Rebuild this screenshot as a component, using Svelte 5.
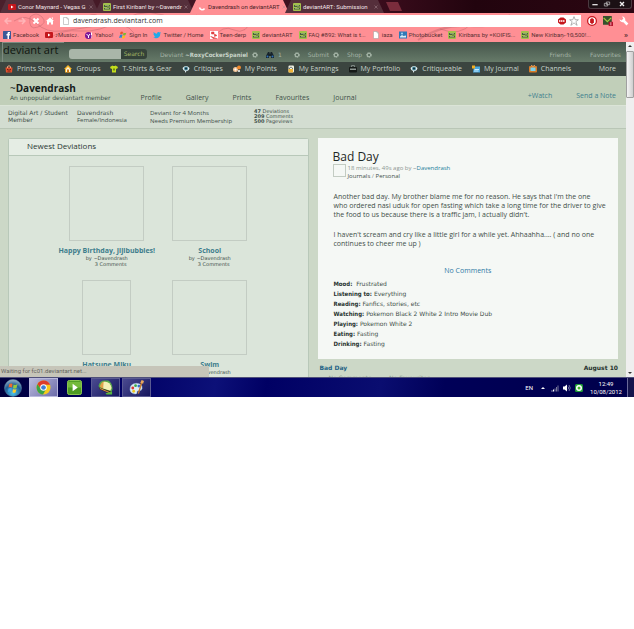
<script>
  const tabs = [
    { title: 'Conor Maynard - Vegas G', icon: 'youtube' },
    { title: 'First Kiriban! by ~Davendr', icon: 'da' },
    { title: 'Davendrash on deviantART', icon: 'spinner', active: true },
    { title: 'deviantART: Submission', icon: 'da' },
  ];

  const bookmarks = [
    { label: 'Facebook', icon: 'facebook' },
    { label: '♪Music♪.', icon: 'youtube' },
    { label: 'Yahoo!', icon: 'yahoo' },
    { label: 'Sign In', icon: 'windows' },
    { label: 'Twitter / Home', icon: 'twitter' },
    { label: 'Teen-derp', icon: 'derp' },
    { label: 'deviantART', icon: 'da' },
    { label: 'FAQ #892: What is t...', icon: 'da' },
    { label: 'iaza', icon: 'page' },
    { label: 'Photobucket', icon: 'photo' },
    { label: 'Kiribans by =KOIFIS...', icon: 'da' },
    { label: 'New Kiriban- 10,500!...', icon: 'da' },
  ];

  const navItems = [
    { label: 'Prints Shop', icon: 'bag' },
    { label: 'Groups', icon: 'house' },
    { label: 'T-Shirts & Gear', icon: 'shirt' },
    { label: 'Critiques', icon: 'critique' },
    { label: 'My Points', icon: 'points' },
    { label: 'My Earnings', icon: 'earnings' },
    { label: 'My Portfolio', icon: 'portfolio' },
    { label: 'Critiqueable', icon: 'critique' },
    { label: 'My Journal', icon: 'journal' },
    { label: 'Channels', icon: 'channels' },
  ];

  const profileLinks = ['Profile', 'Gallery', 'Prints', 'Favourites', 'Journal'];

  const deviations = [
    { title: 'Happy Birthday, Jijibubbles!', comments: '3 Comments' },
    { title: 'School', comments: '3 Comments' },
    { title: 'Hatsune Miku', narrow: true },
    { title: 'Swim' },
  ];

  const moods = [
    ['Mood:', '\u00a0Frustrated'],
    ['Listening to:', 'Everything'],
    ['Reading:', 'Fanfics, stories, etc'],
    ['Watching:', 'Pokemon Black 2 White 2 Intro Movie Dub'],
    ['Playing:', 'Pokemon White 2'],
    ['Eating:', 'Fasting'],
    ['Drinking:', 'Fasting'],
  ];
</script>

{#snippet icon(name)}
  <svg class="icon" viewBox="0 0 16 16" aria-hidden="true">
    {#if name === 'youtube'}
      <rect x="0" y="2" width="16" height="12" rx="2" fill="#c4161c" />
      <path d="M6 5l5 3-5 3z" fill="#fff" />
    {:else if name === 'da'}
      <rect width="16" height="16" rx="2" fill="#a3c04c" />
      <path d="M2 4h12v3H8v2h6v4H2v-3h6V8H2z" fill="#46603a" />
      <path d="M4 5h8M4 11h8" stroke="#d8e8a0" />
    {:else if name === 'spinner'}
      <path d="M3 9a5.500 5.500 0 0 0 10 2" fill="none" stroke="#fff" stroke-width="3" />
    {:else if name === 'facebook'}
      <rect width="16" height="16" rx="1" fill="#3b5998" />
      <path d="M9 16V9H7V6h2V4.500C9 2.500 10 2 12 2h2v3h-1.500c-.5 0-.5.3-.5.700V6h2l-.4 3H12v7z" fill="#fff" />
    {:else if name === 'yahoo'}
      <circle cx="7" cy="9" r="7" fill="#7b1596" />
      <path d="M3 6l4 4 3-4M7 10v4M13 3v6M13 11v2" stroke="#fff" stroke-width="2" fill="none" />
    {:else if name === 'windows'}
      <path d="M3 2q3-2 5 0L7 7Q4 5 2 7z" fill="#e8562a" />
      <path d="M9 3q3 2 6 0l-2 5q-3 2-5 0z" fill="#7cb82f" />
      <path d="M2 8q3-2 5 0l-2 6q-2-2-5 0z" fill="#2c86d0" />
      <path d="M8 9q3 2 5 0l-2 5q-2 2-5 0z" fill="#f9c112" />
    {:else if name === 'twitter'}
      <path d="M0 13c3 0 4-1 5-2-2 0-3-1-3-2l1-.2C1 8 .5 6 1 5.500l1 .3C.5 4 1 2.500 1.500 2c2 2 4 3.500 6.500 3.500C8 3 9.500 2 11 2c1.500 0 2 .5 2.500 1L16 2.500 14.500 5C15 12 9 17 0 13z" fill="#23a9e8" />
    {:else if name === 'derp'}
      <rect width="16" height="16" fill="#fff" />
      <path d="M3 2h5v4H3zM9 6l5 3-5 2zM1 10l5 5h9" fill="#e2484c" stroke="#d33" />
    {:else if name === 'page'}
      <path d="M3 1h7l3 3v11H3z" fill="#fff" stroke="#999" />
      <path d="M10 1v3h3" fill="none" stroke="#999" />
    {:else if name === 'photo'}
      <rect y="1" width="16" height="14" fill="#2f79b7" />
      <path d="M2 11l4-3 3 2 5-1v4H2z" fill="#d8edf8" />
      <circle cx="6" cy="5" r="2" fill="#a9d7f2" />
    {:else if name === 'bag'}
      <path d="M1 5h14l-1 10H2z" fill="#e2512e" />
      <path d="M5 6V3q3-3 6 0v3" fill="none" stroke="#f3a07a" stroke-width="2" />
      <path d="M4 9h3M9 9h3M5 12h6" stroke="#7a1f10" stroke-width="2" />
    {:else if name === 'house'}
      <path d="M8 0l8 8h-2v7H2V8H0z" fill="#f7b52a" />
      <path d="M8 4l4 4v6H4V8z" fill="#fff6d8" />
      <rect x="6" y="9" width="4" height="6" fill="#c9771a" />
    {:else if name === 'shirt'}
      <path d="M5 1q3 2 6 0l5 3-2 4-2-1v8H4V7L2 8 0 4z" fill="#c3dd1c" />
      <path d="M6 7h4v4H6z" fill="#6f8b12" />
    {:else if name === 'critique'}
      <path d="M1 6q7-8 14 0-1 6-6 6l-3 4v-4Q2 11 1 6z" fill="#e6f1f2" />
      <circle cx="8" cy="7" r="4" fill="#4b8fa3" />
      <circle cx="8" cy="7" r="2" fill="#132a33" />
    {:else if name === 'points'}
      <circle cx="5" cy="9" r="5" fill="#f4c79a" />
      <circle cx="12" cy="5" r="4" fill="#f08a2c" />
      <path d="M3 9h4M5 7v4" stroke="#fff" stroke-width="2" />
      <circle cx="12" cy="12" r="2" fill="#fff" />
    {:else if name === 'earnings'}
      <rect x="3" y="1" width="11" height="14" rx="2" fill="#f2f2e4" />
      <path d="M5 9V6q3-4 6 0v3" fill="none" stroke="#6c7c78" stroke-width="2" />
      <rect x="3" y="8" width="9" height="7" fill="#eeb43a" />
    {:else if name === 'portfolio'}
      <rect x="0" y="4" width="16" height="11" rx="2" fill="#161a18" />
      <path d="M5 4V1h6v3" fill="none" stroke="#7d8682" stroke-width="2" />
      <path d="M2 7h12v3H2z" fill="#8d9692" />
    {:else if name === 'journal'}
      <path d="M4 3h12v12H2z" fill="#4ba8de" />
      <path d="M5 9h9M4 12h9" stroke="#c9ecff" stroke-width="2" />
      <path d="M0 1h6v6H0z" fill="#f3ae21" />
    {:else if name === 'channels'}
      <rect x="0" y="2" width="16" height="13" rx="2" fill="#d77a26" />
      <rect x="3" y="5" width="10" height="7" fill="#79d2ee" />
      <path d="M4 0l4 3 4-3" fill="none" stroke="#eaa25e" stroke-width="2" />
    {/if}
  </svg>
{/snippet}

{#snippet gear()}
  <svg class="gear" viewBox="0 0 12 12" aria-hidden="true">
    <circle cx="6" cy="6" r="4" fill="none" stroke="#a3b3a5" stroke-width="3" stroke-dasharray="2.500 1" />
    <circle cx="6" cy="6" r="3.500" fill="none" stroke="#a3b3a5" stroke-width="2" />
  </svg>
{/snippet}

<div class="browser">
  <div class="tabstrip">
    {#each tabs as tab}
      <div class="tab" class:active={tab.active}>
        {@render icon(tab.icon)}
        <span class="tab-title">{tab.title}</span>
        <button class="tab-close" aria-label="Close tab">
          <svg viewBox="0 0 8 8"><path d="M1 1l6 6M7 1L1 7" stroke="currentColor" stroke-width="1" /></svg>
        </button>
      </div>
    {/each}
    <button class="new-tab" aria-label="New tab"></button>
    <div class="window-buttons">
      <button aria-label="Minimize"><svg viewBox="0 0 12 8"><path d="M2 5h8" stroke="#ddd" stroke-width="2" /></svg></button>
      <button aria-label="Restore"><svg viewBox="0 0 12 8"><path d="M5 1h5v4H5zM2 3h5v4H2z" fill="none" stroke="#ccc" /></svg></button>
      <button class="wide" aria-label="Close"><svg viewBox="0 0 12 8"><path d="M3 1l6 6M9 1L3 7" stroke="#eee" stroke-width="2" /></svg></button>
    </div>
  </div>

  <div class="chrome">
    <svg class="branches" viewBox="0 0 634 29" preserveAspectRatio="none" aria-hidden="true">
      <g fill="none" stroke="#a8575f" stroke-opacity="0.35">
        <path d="M14 8q12-8 22 2t26 8 40-6 32 8" />
        <path d="M48 26q14-10 32-8t44-12 52 2" />
        <path d="M30 4q6-6 12 0t-4 10-8-10M88 3q8-4 12 2t-8 8-4-10" />
        <path d="M196 2q18 12 34 6M214 25q8-14 20-8t20-14" />
        <path d="M418 27q24-16 52-14t40-11" stroke-width="2" />
        <path d="M436 4q8 6 18 2M440 16q20 8 32-6M484 5q10 12 24 7" />
        <path d="M560 27q8-9 14-4" />
      </g>
    </svg>

    <div class="toolbar">
      <button class="tool" aria-label="Back"><svg viewBox="0 0 16 16"><path d="M8 2L2 8l6 6M2 8h13" fill="none" stroke="#ffb5b8" stroke-width="3" /></svg></button>
      <button class="tool" aria-label="Forward"><svg viewBox="0 0 16 16"><path d="M8 2l6 6-6 6M14 8H1" fill="none" stroke="#ffb5b8" stroke-width="3" /></svg></button>
      <button class="tool" aria-label="Stop"><svg viewBox="0 0 16 16"><path d="M3 3l10 10M13 3L3 13" stroke="#fff" stroke-width="4" /></svg></button>
      <button class="tool" aria-label="Home"><svg viewBox="0 0 16 16"><path d="M8 1l8 7h-2v7h-4v-4H6v4H2V8H0zM11 1h3v4z" fill="#fff" /></svg></button>
      <div class="omnibox">
        {@render icon('page')}
        <input type="text" aria-label="Address" value="davendrash.deviantart.com" />
        <svg class="icon" viewBox="0 0 16 16"><path d="M5 1h6l5 4v6l-5 4H5l-5-4V5z" fill="#c4161c" /><path d="M2 8h12" stroke="#f7c7c7" stroke-width="4" stroke-dasharray="3 1" /></svg>
        <svg class="star" viewBox="0 0 16 16"><path d="M8 1l2 5h5l-4 3 2 6-5-4-5 4 2-6-4-3h5z" fill="#fff" stroke="#888" /></svg>
      </div>
      <div class="extensions">
        <svg viewBox="0 0 16 16"><circle cx="8" cy="8" r="7" fill="#fff" stroke="#c4161c" stroke-width="2" /><path d="M5 5l3-2 3 2v5l-3 3-3-3z" fill="#c4161c" /></svg>
        <svg viewBox="0 0 16 16"><rect width="14" height="14" fill="#36512b" /><path d="M1 3l6 6 6-6" fill="none" stroke="#a5c840" stroke-width="2" /><rect x="9" y="9" width="7" height="7" rx="1" fill="#b3122b" /><path d="M12.500 10v5" stroke="#fff" /></svg>
        <svg viewBox="0 0 16 16"><path d="M5 1a5 5 0 0 1 5 6l5 5-3 3-5-5a5 5 0 0 1-6-5l3 2 3-3z" fill="#fff" /></svg>
      </div>
    </div>

    <div class="bookmarks">
      {#each bookmarks as mark}
        <a href="#bookmark">{@render icon(mark.icon)}{mark.label}</a>
      {/each}
      <span class="more-marks">»</span>
    </div>
  </div>

  <div class="viewport">
    <div class="page">
      <header class="top">
        <a class="logo" href="#home">deviant art</a>
        <form class="search">
          <input type="text" aria-label="Search deviantART" />
          <button type="button">Search</button>
        </form>
        <div class="account">
          <span>Deviant <b>~RoxyCockerSpaniel</b></span>
          {@render gear()}
        </div>
        <div class="account messages">
          <svg class="icon" viewBox="0 0 16 16" aria-hidden="true"><path d="M4 2h3v3h2V2h3l4 8v4h-6v-4H6v4H0v-4z" fill="#17232b" /><circle cx="3" cy="11" r="2" fill="#2e6fb8" /><circle cx="13" cy="11" r="2" fill="#2e6fb8" /></svg>
          <span>1</span>
        </div>
        <div class="account">{@render gear()}</div>
        <div class="account"><span>Submit</span>{@render gear()}</div>
        <div class="account"><span>Shop</span>{@render gear()}</div>
        <div class="top-links">
          <a href="#friends">Friends</a>
          <a href="#favourites">Favourites</a>
        </div>
      </header>

      <nav class="shortcuts">
        {#each navItems as item}
          <a href="#nav">{@render icon(item.icon)}{item.label}</a>
        {/each}
        <a class="more" href="#more">More</a>
      </nav>

      <section class="profile">
        <div class="who">
          <h1><span>~</span>Davendrash</h1>
          <p>An unpopular deviantart member</p>
        </div>
        <nav class="profile-links">
          {#each profileLinks as link}
            <a href="#profile">{link}</a>
          {/each}
        </nav>
        <div class="actions">
          <a href="#watch">+Watch</a>
          <a href="#note">Send a Note</a>
        </div>
      </section>

      <section class="facts">
        <p>Digital Art / Student Member</p>
        <p>Davendrash<br><small>Female/Indonesia</small></p>
        <p><small>Deviant for 4 Months<br>Needs Premium Membership</small></p>
        <p class="stats"><b>47</b> Deviations<br><b>209</b> Comments<br><b>500</b> Pageviews</p>
      </section>

      <main>
        <section class="panel">
          <h2>Newest Deviations</h2>
          <div class="thumbs">
            {#each deviations as dev}
              <div class="deviation">
                <a class="thumb" class:narrow={dev.narrow} href="#deviation" aria-label={dev.title}></a>
                <a class="dev-title" href="#deviation">{dev.title}</a>
                <span>by ~Davendrash</span>
                {#if dev.comments}
                  <span class="dev-comments">{dev.comments}</span>
                {/if}
              </div>
            {/each}
          </div>
        </section>

        <div class="journal">
          <article>
            <h2>Bad Day</h2>
            <div class="byline">
              <span class="avatar"></span>
              <p>
                <span class="ago">18 minutes, 49s ago by ~</span><a href="#user">Davendrash</a><br>
                Journals <span class="ago">/</span> Personal
              </p>
            </div>
            <div class="entry">
              <p>Another bad day. My brother blame me for no reason. He says that I'm the one<br> who ordered nasi uduk for open fasting which take a long time for the driver to give the food to us because there is a traffic jam, I actually didn't.</p>
              <p>I haven't scream and cry like a little girl for a while yet. Ahhaahha.... ( and no one continues to cheer me up )</p>
            </div>
            <a class="comments" href="#comments">No Comments</a>
            <ul>
              {#each moods as [name, value]}
                <li><b>{name}</b> {value}</li>
              {/each}
            </ul>
          </article>
          <div class="older">
            <a href="#older">Bad Day</a>
            <span>August 10</span>
          </div>
          <div class="older-meta">
            <span>No Comments</span>
            <span>No Favourites</span>
          </div>
        </div>
      </main>
    </div>

    <div class="scrollbar">
      <svg viewBox="0 0 8 8"><path d="M2 5l2-2 2 2z" fill="#333" /></svg>
      <span class="thumb-bar"></span>
      <svg class="down" viewBox="0 0 8 8"><path d="M2 3l2 2 2-2z" fill="#333" /></svg>
    </div>

    <div class="status">Waiting for fc01.deviantart.net...</div>
  </div>
</div>

<footer class="taskbar">
  <button class="start" aria-label="Start">
    <svg viewBox="0 0 36 36">
      <defs>
        <radialGradient id="orb" cx="0.5" cy="0.8" r="0.8">
          <stop offset="0" stop-color="#4fc4ea" />
          <stop offset="0.6" stop-color="#1d5c94" />
          <stop offset="1" stop-color="#9fb9cc" />
        </radialGradient>
      </defs>
      <circle cx="18" cy="18" r="17" fill="url(#orb)" stroke="#5d87a3" />
      <path d="M10 11q4-3 7-1l-1 7q-4-2-7 0z" fill="#ef6a30" />
      <path d="M19 11q4 2 8-1l-2 8q-4 2-7 0z" fill="#93c83d" />
      <path d="M9 19q4-2 7 0l-2 7q-3-2-6 0z" fill="#41a3e2" />
      <path d="M18 20q4 2 7 0l-2 7q-4 2-6-1z" fill="#fbcb2c" />
    </svg>
  </button>
  <button class="app lit" aria-label="Chrome">
    <svg viewBox="0 0 32 32">
      <circle cx="16" cy="16" r="15" fill="#f6cb1c" />
      <path d="M3 9A15 15 0 0 1 30 10H16L10 18z" fill="#dd3b2a" />
      <path d="M3 9a15 15 0 0 0 12 22l6-11H11z" fill="#39a348" />
      <circle cx="16" cy="16" r="7" fill="#fff" />
      <circle cx="16" cy="16" r="5" fill="#3d7fd6" />
    </svg>
  </button>
  <button class="app plain" aria-label="Media player">
    <svg viewBox="0 0 32 32">
      <rect x="1" y="1" width="30" height="30" rx="4" fill="#4d9b22" stroke="#93cf55" stroke-width="2" />
      <path d="M2 4h28v12H2z" fill="#74ba3b" />
      <path d="M12 8l11 8-11 8z" fill="#fff" />
    </svg>
  </button>
  <button class="app" aria-label="Paint Tool SAI">
    <svg viewBox="0 0 32 32">
      <path d="M1 13Q3 1 14 1h8q9 6 9 18l-3 9L4 18z" fill="#58a84b" />
      <path d="M4 14Q6 3 15 3l-4 16z" fill="#e3a24a" />
      <path d="M12 4q13-3 17 13l-3 6-15-5z" fill="#f5f0b4" />
      <path d="M2 16l25 8-1 5L4 20z" fill="#3c2213" />
      <path d="M4 18l21 9" stroke="#e1a14c" stroke-width="2" />
      <path d="M16 28l14-3v6H18z" fill="#57b83e" />
    </svg>
  </button>
  <button class="app" aria-label="Paint">
    <svg viewBox="0 0 32 32">
      <path d="M2 20Q2 8 16 7q13 1 12 11-1 6-8 5-4 0-3 5-3 3-8 1-7-3-7-9z" fill="#dcebf7" stroke="#8fb6d6" />
      <circle cx="8" cy="17" r="3" fill="#d8392e" />
      <circle cx="14" cy="12" r="3" fill="#3daa49" />
      <circle cx="21" cy="13" r="3" fill="#2f6fd0" />
      <circle cx="10" cy="24" r="3" fill="#efc51e" />
      <path d="M28 2l-8 27" stroke="#c97a2b" stroke-width="3" />
      <path d="M24 6l3-6 5 2-2 6z" fill="#e8a860" />
    </svg>
  </button>

  <div class="tray">
    <span class="lang">EN</span>
    <svg viewBox="0 0 16 16"><path d="M4 10l4-4 4 4z" fill="#fff" /></svg>
    <svg viewBox="0 0 16 16"><path d="M1 13h2v2H1zM4 11h2v4H4z" fill="#fff" /><path d="M7 9h2v6H7zM10 6h2v9h-2zM13 3h2v12h-2z" fill="#77779c" /></svg>
    <svg viewBox="0 0 16 16"><path d="M0 5h3l5-4v14l-5-4H0z" fill="#fff" /><path d="M10 5q3 3 0 6M12 2q5 6 0 12" fill="none" stroke="#d5d5ea" stroke-width="1" /></svg>
    <svg viewBox="0 0 16 16"><rect width="16" height="16" rx="3" fill="#1f9b36" /><circle cx="8" cy="8" r="6" fill="#fff" /><circle cx="8" cy="8" r="3" fill="#45b52b" /></svg>
    <div class="clock">12:49<br>10/08/2012</div>
  </div>
  <button class="show-desktop" aria-label="Show desktop"></button>
</footer>

<style>
  :global(body) {
    margin: 0;
    background: #fff;
  }

  .browser,
  .taskbar {
    font-family: Roboto, 'Open Sans', sans-serif;
    font-size: 6px;
    line-height: 8px;
  }

  button,
  input {
    margin: 0;
    padding: 0;
    border: 0;
    background: none;
    font: inherit;
    color: inherit;
  }

  a {
    color: inherit;
    text-decoration: none;
  }

  h1, h2, p, ul {
    margin: 0;
    padding: 0;
    list-style: none;
  }

  svg {
    display: block;
    flex-shrink: 0;
  }

  .icon {
    width: 8px;
    height: 8px;
  }

  /* Tabs */
  .tabstrip {
    display: flex;
    align-items: flex-end;
    height: 13px;
    background: linear-gradient(90deg, #4a1f2b, #3a0c1c 60%, #22040e 75%, #2c0612);
    overflow: hidden;
  }

  .tab {
    display: flex;
    align-items: center;
    gap: 2px;
    flex: 0 1 99px;
    min-width: 0;
    box-sizing: border-box;
    height: 13px;
    padding: 0 6px 0 8px;
    margin-right: -4px;
    background: #552f3b;
    color: #f4e6e8;
    clip-path: polygon(6px 0, calc(100% - 6px) 0, 100% 100%, 0 100%);
  }

  .tab.active {
    background: #ff8f94;
    color: #4c2227;
  }

  .tab-title {
    flex: 1;
    white-space: nowrap;
  }

  .tab-close {
    color: #a98d94;
  }

  .tab-close svg {
    width: 4px;
    height: 4px;
  }

  .new-tab {
    width: 16px;
    height: 9px;
    margin: 0 0 2px 6px;
    background: #7a2c3c;
    clip-path: polygon(0 0, 12px 0, 100% 100%, 4px 100%);
  }

  .window-buttons {
    display: flex;
    align-self: flex-start;
    margin: 0 2px 0 auto;
    border: 1px solid #4b3940;
    border-top: 0;
    border-radius: 0 0 3px 3px;
    background: #1b1014;
  }

  .window-buttons button {
    width: 12px;
    height: 8px;
  }

  .window-buttons svg {
    width: 8px;
    height: 6px;
    margin: auto;
  }

  .window-buttons .wide {
    width: 18px;
  }

  /* Toolbar and bookmarks */
  .chrome {
    position: relative;
    background: #ff8f94;
    color: #5a3033;
  }

  .branches {
    position: absolute;
    inset: 0;
    width: 100%;
    height: 100%;
  }

  .toolbar {
    position: relative;
    display: flex;
    align-items: center;
    gap: 6px;
    padding: 2px 5px 0 4px;
  }

  .tool svg {
    width: 8px;
    height: 8px;
  }

  .omnibox {
    display: flex;
    flex: 1;
    align-items: center;
    gap: 3px;
    height: 12px;
    padding: 0 2px;
    background: #fff;
  }

  .omnibox input {
    flex: 1;
    min-width: 0;
    font-family: 'Open Sans', sans-serif;
    font-size: 7px;
    color: #333;
  }

  .extensions {
    display: flex;
    gap: 6px;
  }

  .extensions svg,
  .star {
    width: 10px;
    height: 10px;
  }

  .bookmarks {
    position: relative;
    display: flex;
    align-items: center;
    gap: 6px;
    height: 15px;
    padding: 0 6px 0 3px;
    white-space: nowrap;
  }

  .bookmarks a {
    display: flex;
    align-items: center;
    gap: 2px;
  }

  .more-marks {
    margin-left: auto;
    font-size: 8px;
    font-weight: bold;
  }

  /* Page area */
  .viewport {
    position: relative;
    display: flex;
  }

  .page {
    flex: 1;
    min-width: 0;
    background: #ccd8c7;
    color: #3f4f49;
    font-family: 'DejaVu Sans', Verdana, sans-serif;
  }

  .top {
    display: flex;
    align-items: center;
    height: 20px;
    padding-right: 5px;
    background: linear-gradient(#45554b, #667a69);
    color: #a3b3a5;
  }

  .logo {
    align-self: flex-start;
    box-sizing: border-box;
    width: 62px;
    height: 20px;
    margin-left: 2px;
    border-top: 1px solid #7d8b81;
    border-left: 1px solid #7d8b81;
    color: #10150f;
    font-family: 'Open Sans', sans-serif;
    font-size: 11px;
    line-height: 14px;
    white-space: nowrap;
  }

  .search {
    display: flex;
    width: 78px;
    margin: 4px 13px 0 5px;
    border-radius: 3px;
    overflow: hidden;
  }

  .search input {
    flex: 1;
    min-width: 0;
    height: 10px;
    background: #a9b6a9;
  }

  .search button {
    width: 26px;
    background: #344239;
    color: #a3b765;
  }

  .account {
    display: flex;
    align-items: center;
    gap: 4px;
    margin: 5px 8px 0 0;
  }

  .account b {
    color: #c8d4c9;
    font-family: 'DejaVu Sans Condensed', 'DejaVu Sans', sans-serif;
  }

  .messages {
    margin-right: 12px;
  }

  .gear {
    width: 6px;
    height: 6px;
  }

  .top-links {
    display: flex;
    gap: 19px;
    margin: 5px 0 0 auto;
  }

  .shortcuts {
    display: flex;
    align-items: center;
    gap: 10px;
    height: 14px;
    padding: 0 10px 0 5px;
    background: #3b4540;
    color: #c9d4cb;
    font-family: 'Open Sans', sans-serif;
    font-size: 7px;
    white-space: nowrap;
  }

  .shortcuts a {
    display: flex;
    align-items: center;
    gap: 4px;
  }

  .shortcuts .more {
    margin-left: auto;
  }

  .profile {
    display: flex;
    align-items: flex-end;
    height: 26px;
    padding: 0 10px 3px;
    border-bottom: 1px solid #dbe4d7;
    background: #c1cfb9;
  }

  .who {
    margin-right: 30px;
  }

  .who h1 {
    color: #16201b;
    font-family: 'Open Sans', sans-serif;
    font-size: 10px;
    line-height: 12px;
  }

  .who h1 span {
    font-weight: normal;
  }

  .profile-links,
  .actions {
    display: flex;
    gap: 24px;
    font-family: 'Open Sans', sans-serif;
    font-size: 7px;
  }

  .actions {
    margin: 0 0 2px auto;
    color: #3f7f8e;
  }

  .facts {
    display: grid;
    grid-template-columns: 69px 73px 104px 1fr;
    height: 19px;
    padding: 3px 8px 0;
    border-bottom: 1px solid #b9c6b6;
    background: #d3ddd1;
    line-height: 7px;
  }

  .facts small {
    font-family: 'Open Sans', sans-serif;
    font-size: 6px;
  }

  .facts .stats {
    font-size: 5px;
    line-height: 5px;
  }

  main {
    display: grid;
    grid-template-columns: 1fr 1fr;
    gap: 9px;
    padding: 9px 8px 0;
  }

  .panel {
    border: 1px solid #b8c8b9;
    border-bottom: 0;
    border-radius: 3px 3px 0 0;
    background: #dbe5da;
  }

  .panel h2 {
    padding: 1px 18px 3px;
    border-bottom: 1px solid #b8c8b9;
    background: #e5ede4;
    color: #2b3834;
    font-family: 'Open Sans', sans-serif;
    font-size: 8px;
    font-weight: normal;
    line-height: 12px;
  }

  .thumbs {
    display: grid;
    grid-template-columns: 103px 103px;
    justify-content: center;
    row-gap: 13px;
    padding-top: 10px;
  }

  .deviation {
    display: flex;
    flex-direction: column;
    align-items: center;
    font-size: 5px;
    line-height: 6px;
    white-space: nowrap;
  }

  .thumb {
    box-sizing: border-box;
    width: 75px;
    height: 75px;
    margin-bottom: 6px;
    border: 1px solid #c3ccc3;
  }

  .thumb.narrow {
    width: 49px;
  }

  .dev-title {
    color: #3e7d8c;
    font-family: 'Open Sans', sans-serif;
    font-size: 7px;
    font-weight: bold;
    line-height: 8px;
  }

  .dev-comments {
    margin-left: 8px;
  }

  /* Journal */
  .journal {
    min-width: 0;
  }

  article {
    padding: 11px 15px 10px;
    background: #f5f8f5;
  }

  article h2 {
    color: #1d2725;
    font-family: 'Open Sans', sans-serif;
    font-size: 12px;
    font-weight: normal;
    line-height: 15px;
  }

  .byline {
    display: flex;
    gap: 2px;
    font-family: 'Open Sans', sans-serif;
    line-height: 8px;
  }

  .byline a {
    color: #23809a;
  }

  .ago {
    color: #8c9692;
  }

  .avatar {
    box-sizing: border-box;
    width: 13px;
    height: 13px;
    border: 1px solid #c3ccc3;
  }

  .entry {
    margin: 12px -9px 19px 1px;
    font-family: 'Open Sans', sans-serif;
    font-size: 7px;
    line-height: 9px;
  }

  .entry p + p {
    margin-top: 11px;
  }

  .comments {
    display: block;
    margin-bottom: 4px;
    color: #2f7ba5;
    font-family: 'Open Sans', sans-serif;
    font-size: 7px;
    text-align: center;
  }

  article ul {
    margin-left: 1px;
    line-height: 10px;
  }

  article li b {
    color: #27332f;
    font-family: 'DejaVu Sans Condensed', 'DejaVu Sans', sans-serif;
  }

  .older {
    display: flex;
    justify-content: space-between;
    padding: 5px 0 2px 2px;
    color: #27332f;
    font-weight: bold;
  }

  .older a {
    color: #1f6285;
  }

  .older-meta {
    display: flex;
    gap: 18px;
    height: 3px;
    padding-left: 11px;
    overflow: hidden;
    color: #8fa08f;
    line-height: 7px;
  }

  .scrollbar {
    display: flex;
    flex-direction: column;
    width: 8px;
    background: #efefef;
  }

  .scrollbar .down {
    margin-top: auto;
  }

  .thumb-bar {
    box-sizing: border-box;
    height: 47px;
    margin-top: 1px;
    border: 1px solid #a0a0a0;
    border-radius: 1px;
    background: linear-gradient(90deg, #f4f4f4, #cfcfcf);
  }

  .status {
    position: absolute;
    left: 0;
    bottom: 0;
    width: 33%;
    box-sizing: border-box;
    padding: 1px 1px 2px;
    background: #c6c5b9;
    color: #65665f;
  }

  /* Taskbar */
  .taskbar {
    display: flex;
    align-items: center;
    height: 20px;
    border-top: 1px solid #50507a;
    box-sizing: border-box;
    background: linear-gradient(100deg, #00003c, #000064 20%, #0c1078 34%, #000064 42%, #0a0d70 60%, #000058 70%, #00004a);
    color: #fff;
  }

  .start svg {
    width: 18px;
    height: 18px;
  }

  .start {
    margin: 0 7px 0 4px;
  }

  .app {
    box-sizing: border-box;
    width: 29px;
    height: 19px;
    margin-right: 2px;
    border: 1px solid #5a5a92;
    background: linear-gradient(135deg, #4a4a90, #16165e);
  }

  .app.lit {
    border-color: #b9b9dd;
    background: linear-gradient(135deg, #b9b9dc, #6c6caa);
  }

  .app.plain {
    border-color: transparent;
    background: none;
  }

  .app svg {
    width: 15px;
    height: 15px;
    margin: auto;
  }

  .tray {
    display: flex;
    align-items: center;
    gap: 4px;
    margin-left: auto;
  }

  .tray svg {
    width: 8px;
    height: 8px;
  }

  .lang {
    margin-right: 2px;
  }

  .clock {
    width: 38px;
    text-align: center;
  }

  .show-desktop {
    width: 7px;
    height: 19px;
    margin-left: 2px;
    border-left: 1px solid #6a6a9a;
    background: #14144c;
  }
</style>
